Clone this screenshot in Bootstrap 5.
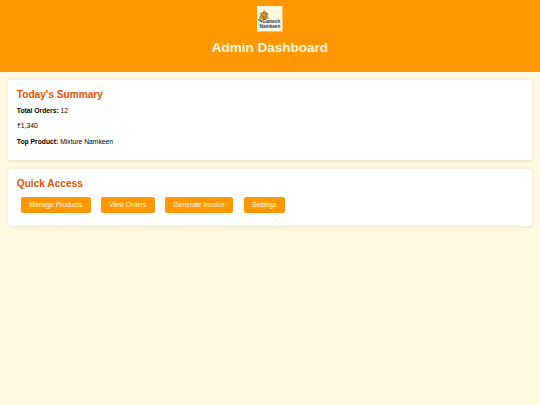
<!DOCTYPE html>
<html lang="en">
<head>
  <meta charset="UTF-8" />
  <meta name="viewport" content="width=device-width, initial-scale=1" />
  <title>Admin Dashboard</title>
  <link href="https://cdn.jsdelivr.net/npm/bootstrap@5.3.3/dist/css/bootstrap.min.css" rel="stylesheet" />
  <style>
    body {
      background-color: #fff8e1;
      color: #000;
      font-family: "Liberation Sans", Arial, sans-serif;
      font-size: 6.75px;
      line-height: 7.75px;
      min-height: 100vh;
    }
    .top-header {
      background-color: #ff9800;
      color: #fff8e1;
      height: 71.5px;
      padding-top: 6.4px;
    }
    .brand-logo { width: 25.4px; height: 25.4px; }
    .top-header h1 {
      font-size: 13.5px;
      line-height: 16px;
      margin-top: 8.5px;
    }
    .panel {
      border: 0;
      border-radius: 3.4px;
      margin: 8.4px 8.4px 0;
      padding: 9.2px 8.4px 8.4px;
      box-shadow: 0 0.8px 3.4px rgba(0, 0, 0, 0.1);
      color: #000;
    }
    .summary-panel { height: 80.3px; }
    .access-panel { height: 57.4px; }
    .panel h2 {
      color: #e65100;
      font-size: 10.13px;
      line-height: 12px;
      margin-bottom: 6.2px;
    }
    .panel p { margin-bottom: 7.45px; }
    .quick-links { padding-left: 4.2px; gap: 10.3px; margin-top: 1.3px; }
    .quick-links .btn {
      --bs-btn-color: #fff8e1;
      --bs-btn-bg: #ff9800;
      --bs-btn-hover-color: #fff8e1;
      --bs-btn-hover-bg: #f57c00;
      border: 0;
      border-radius: 2.1px;
      font-size: 6.75px;
      line-height: 7.8px;
      padding: 4.1px 8.4px;
    }
  </style>
</head>
<body>
  <header class="top-header d-flex flex-column align-items-center text-center">
    <svg class="brand-logo" viewBox="0 0 60 60" role="img" aria-label="Ganesh Namkeen">
      <rect width="60" height="60" fill="#fff8e3" />
      <path d="M5 28 L8 22 L6 16 L13 16 L17 9 L22 15 L28 17 L25 23 L29 29 L20 32 L8 32Z" fill="#dfa139" />
      <path d="M11 18 Q17 12 22 18 L24 24 Q20 30 16 26 M7 25 Q12 20 15 25 T12 31" fill="none" stroke="#6b5637" stroke-width="2" />
      <circle cx="19" cy="21" r="2.5" fill="#f28a20" />
      <path d="M3 32 Q8 32 12 38" fill="none" stroke="#1d3b60" stroke-width="3" />
      <g fill="#17365d" font-family="Liberation Sans, sans-serif" font-weight="700" font-size="11.5">
        <text x="13" y="40" textLength="42" lengthAdjust="spacingAndGlyphs">Ganesh</text>
        <text x="6" y="51.5" textLength="49" lengthAdjust="spacingAndGlyphs">Namkeen</text>
      </g>
    </svg>
    <h1 class="fw-bold mb-0">Admin Dashboard</h1>
  </header>

  <main>
    <section class="card panel summary-panel">
      <h2 class="fw-bold">Today's Summary</h2>
      <p><strong>Total Orders:</strong> 12</p>
      <p>₹1,340</p>
      <p><strong>Top Product:</strong> Mixture Namkeen</p>
    </section>

    <section class="card panel access-panel">
      <h2 class="fw-bold">Quick Access</h2>
      <div class="quick-links d-flex">
        <a href="#" class="btn">Manage Products</a>
        <a href="#" class="btn">View Orders</a>
        <a href="#" class="btn">Generate Invoice</a>
        <a href="#" class="btn">Settings</a>
      </div>
    </section>
  </main>

  <script src="https://cdn.jsdelivr.net/npm/bootstrap@5.3.3/dist/js/bootstrap.bundle.min.js"></script>
</body>
</html>
